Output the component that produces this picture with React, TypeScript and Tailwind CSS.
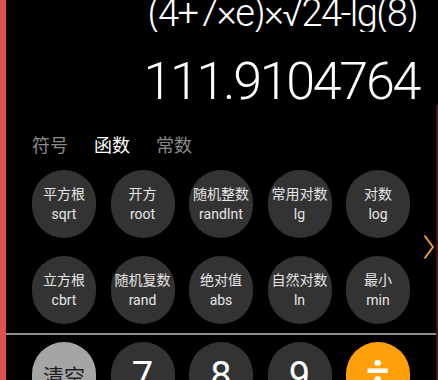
import React from "react";

const fns = [
  { zh: "平方根", en: "sqrt" },
  { zh: "开方", en: "root" },
  { zh: "随机整数", en: "randInt" },
  { zh: "常用对数", en: "lg" },
  { zh: "对数", en: "log" },
  { zh: "立方根", en: "cbrt" },
  { zh: "随机复数", en: "rand" },
  { zh: "绝对值", en: "abs" },
  { zh: "自然对数", en: "ln" },
  { zh: "最小", en: "min" },
];

const font = { fontFamily: "Roboto, 'Noto Sans CJK SC', sans-serif" };

const App = () => {
  return (
    <div
      className="w-[438px] h-[380px] bg-black overflow-hidden flex text-white"
      style={font}
    >
      {/* red edge */}
      <div className="w-[6px] bg-[#e05050] shrink-0" />

      <div className="flex-1 flex flex-col relative">
        {/* expression + result */}
        <div className="h-[32px] shrink-0 overflow-hidden flex justify-end items-end pr-[21px]">
          <div className="text-[38px] leading-[38px] font-light tracking-[-1.6px] whitespace-nowrap">
            (4+7×e)×√24-lg(8)
          </div>
        </div>
        <div className="shrink-0 flex justify-end pr-[19px] mt-[24px]">
          <div className="text-[52px] leading-[52px] font-light tracking-[-2.3px] whitespace-nowrap">
            111.9104764
          </div>
        </div>

        {/* tabs */}
        <div className="shrink-0 flex gap-[26px] pl-[26px] mt-[27px] text-[18px] leading-[22px]">
          <span className="text-[#8a8a8a]">符号</span>
          <span className="text-white">函数</span>
          <span className="text-[#8a8a8a]">常数</span>
        </div>

        {/* function keys */}
        <div className="shrink-0 relative grid grid-cols-[repeat(5,64px)] gap-x-[14.5px] gap-y-[18px] pl-[26px] mt-[13px]">
          {fns.map((f) => (
            <div
              key={f.en}
              className="w-[64px] h-[68px] rounded-full bg-[#333333] flex flex-col items-center justify-center text-[#e6e6e6] text-[14px] leading-[20px]"
            >
              <span>{f.zh}</span>
              <span>{f.en}</span>
            </div>
          ))}
          <svg
            className="absolute right-[3px] top-[64px]"
            width="12"
            height="26"
            viewBox="0 0 12 26"
          >
            <path
              d="M1.5 1.5 L10 13 L1.5 24.5"
              fill="none"
              stroke="#f5a623"
              strokeWidth="1.8"
            />
          </svg>
        </div>

        {/* divider */}
        <div className="shrink-0 h-[1.5px] bg-[#8c8c8c] mt-[9px]" />

        {/* keypad */}
        <div className="shrink-0 flex gap-x-[14.5px] pl-[26px] mt-[7px]">
          <div className="w-[64px] h-[68px] rounded-full bg-[#a5a5a5] flex justify-center pt-[20px] text-[#222] text-[21px]">
            清空
          </div>
          {["7", "8", "9"].map((d) => (
            <div
              key={d}
              className="w-[64px] h-[68px] rounded-full bg-[#333333] flex justify-center pt-[14px] text-[38px] leading-[40px]"
            >
              {d}
            </div>
          ))}
          <div className="w-[64px] h-[68px] rounded-full bg-[#ff9f0a] flex justify-center pt-[10px] text-[40px] leading-[40px] font-bold">
            ÷
          </div>
        </div>

        {/* right edge line */}
        <div className="absolute right-0 top-[105px] bottom-0 w-[2px] bg-[#4a1018]" />
      </div>
    </div>
  );
};

export default App;
